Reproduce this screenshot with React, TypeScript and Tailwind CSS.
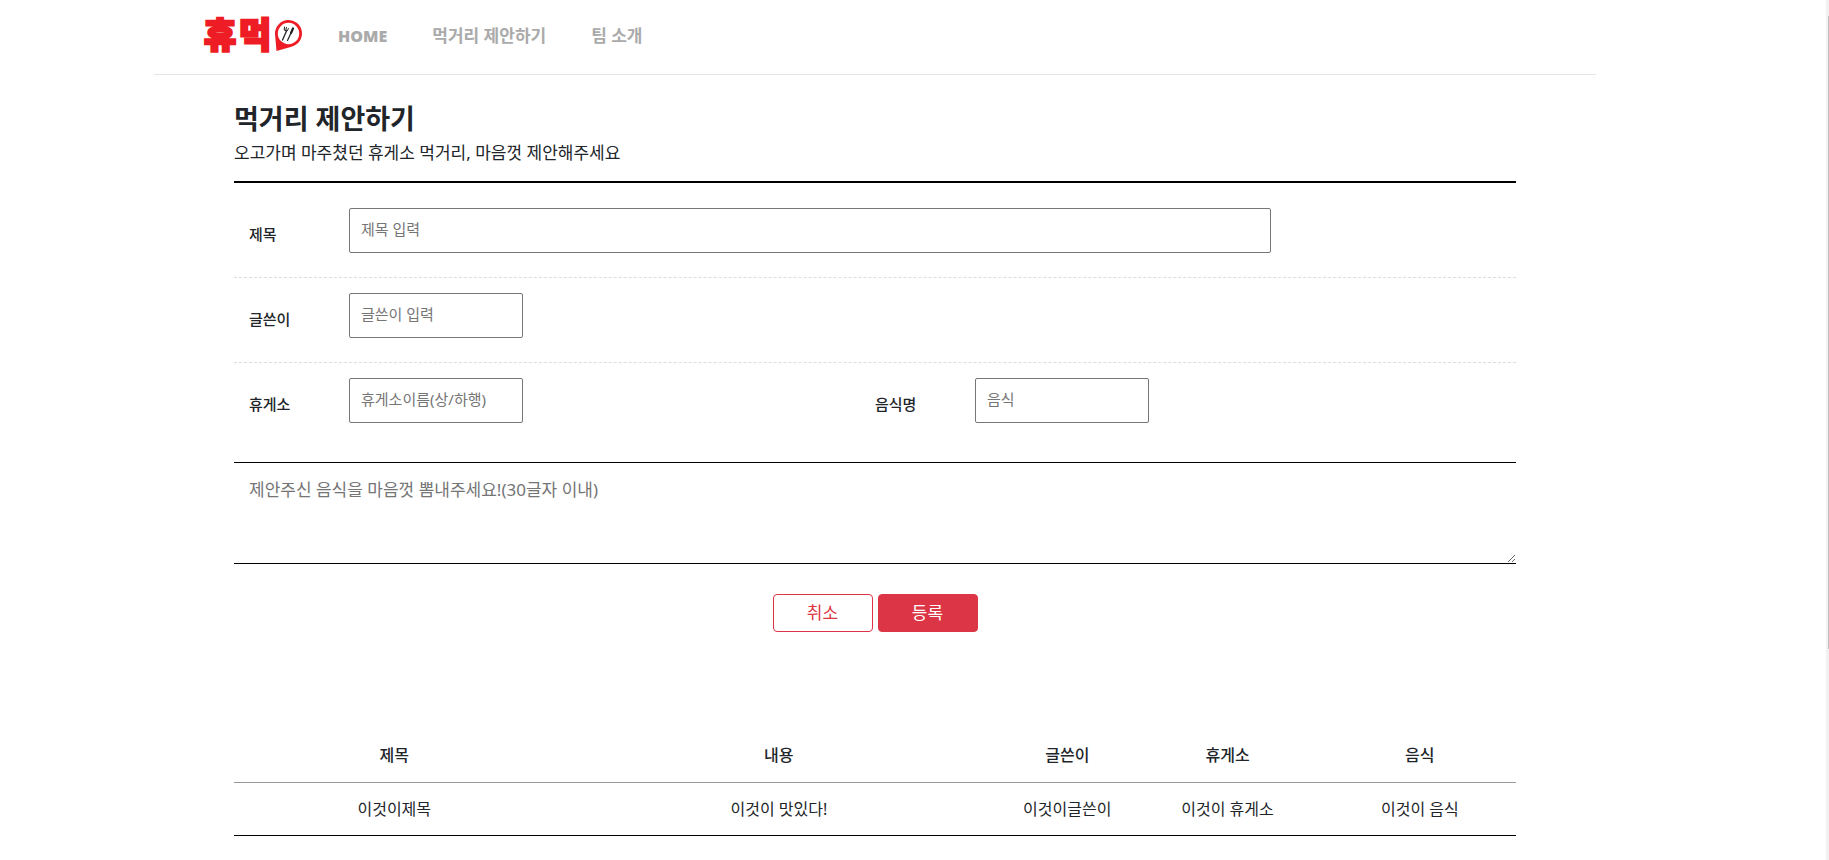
import React from "react";

const rows = [
  {
    title: "이것이제목",
    content: "이것이 맛있다!",
    writer: "이것이글쓴이",
    restArea: "이것이 휴게소",
    food: "이것이 음식",
  },
];

const Logo = () => {
  return (
    <svg
      width="100"
      height="40"
      viewBox="0 0 100 40"
      role="img"
      aria-label="휴먹"
      className="overflow-visible"
    >
      <g
        fontSize="35"
        fontWeight="900"
        fill="#ee1c25"
        stroke="#ee1c25"
        strokeWidth="2.4"
        fontFamily="'Noto Sans CJK KR', sans-serif"
      >
        <text x="1" y="32">
          휴
        </text>
        <text x="36" y="32">
          먹
        </text>
      </g>
      <path d="M73.5 35 L72 18 A13.5 13.5 0 1 1 88.5 30.7 Z" fill="#ee1c25" />
      <circle cx="85.5" cy="17.5" r="10.7" fill="#fff" />
      <g stroke="#222" strokeLinecap="round" fill="none">
        <path d="M83.5 15 L79.5 24" strokeWidth="1.3" />
        <path d="M81.6 11 L81.2 14 L84 15.2 L85.4 12.5 M83.5 11.5 L82.6 14.5" strokeWidth="1" />
        <path d="M90 12.5 L88 17" strokeWidth="2.2" />
        <path d="M88 17 L84.5 24.5" strokeWidth="1.2" />
      </g>
    </svg>
  );
};

type FieldProps = {
  id: string;
  label: string;
  placeholder: string;
  wide?: boolean;
};

const Field = ({ id, label, placeholder, wide }: FieldProps) => {
  return (
    <div className="flex w-full">
      <label htmlFor={id} className="w-[100px] shrink-0 pt-4 text-[15px] leading-5 font-medium">
        {label}
      </label>
      <div className="flex-1">
        <input
          id={id}
          type="text"
          placeholder={placeholder}
          className={`block h-[45px] rounded-xs border border-[#767676] px-[11px] pb-[3px] text-[15px] placeholder:text-[#757575] ${
            wide ? "w-4/5" : "w-[174px]"
          }`}
        />
      </div>
    </div>
  );
};

const App = () => {
  return (
    <div className="flex min-h-screen bg-white font-['Noto_Sans','Noto_Sans_CJK_KR',sans-serif] text-[17px] text-[#212529]">
      <div className="flex-1 pr-[230px] pl-[154px]">
        <header className="flex h-[75px] items-start border-b border-[#e5e5e5] pt-4 pl-[49px]">
          <a href="#home">
            <Logo />
          </a>
          <nav className="flex gap-[45px] pt-2 pl-[35px] leading-6 font-bold text-[#aaa]">
            <a href="#home" className="text-base leading-6 font-black">
              HOME
            </a>
            <a href="#suggest">먹거리 제안하기</a>
            <a href="#team">팀 소개</a>
          </nav>
        </header>

        <main className="px-20">
          <h1 className="pt-6 text-[27px] leading-10 font-bold">먹거리 제안하기</h1>
          <p className="pb-3.5 leading-7">
            오고가며 마주쳤던 휴게소 먹거리, 마음껏 제안해주세요
          </p>

          <form className="border-t-2 border-black">
            <div className="border-b border-dashed border-[#ddd] px-[15px] pt-[25px] pb-6">
              <Field id="title" label="제목" placeholder="제목 입력" wide />
            </div>
            <div className="border-b border-dashed border-[#ddd] px-[15px] pt-[15px] pb-6">
              <Field id="writer" label="글쓴이" placeholder="글쓴이 입력" />
            </div>
            <div className="grid grid-cols-2 px-[15px] pt-[15px] pb-[39px]">
              <Field id="restArea" label="휴게소" placeholder="휴게소이름(상/하행)" />
              <Field id="food" label="음식명" placeholder="음식" />
            </div>
            <textarea
              aria-label="제안 내용"
              placeholder="제안주신 음식을 마음껏 뽐내주세요!(30글자 이내)"
              className="block h-[102px] w-full border-y border-black p-[15px] leading-6 placeholder:text-[#757575]"
            />
            <div className="flex justify-center gap-[5px] pt-[30px]">
              <button
                type="reset"
                className="h-[38px] w-[100px] rounded border border-[#dc3545] text-[#dc3545]"
              >
                취소
              </button>
              <button
                type="submit"
                className="h-[38px] w-[100px] rounded border border-[#dc3545] bg-[#dc3545] text-white"
              >
                등록
              </button>
            </div>
          </form>

          <table className="mt-[97px] w-full table-fixed text-center text-base leading-6">
            <thead>
              <tr className="h-[53px] border-b border-[#999]">
                <th className="w-[25%] font-medium">제목</th>
                <th className="w-[35%] font-medium">내용</th>
                <th className="w-[10%] font-medium">글쓴이</th>
                <th className="w-[15%] font-medium">휴게소</th>
                <th className="w-[15%] font-medium">음식</th>
              </tr>
            </thead>
            <tbody>
              {rows.map((row) => (
                <tr key={row.title} className="h-[53px] border-b border-black">
                  <td>{row.title}</td>
                  <td>{row.content}</td>
                  <td>{row.writer}</td>
                  <td>{row.restArea}</td>
                  <td>{row.food}</td>
                </tr>
              ))}
            </tbody>
          </table>
        </main>
      </div>

      {/* scroll bar */}
      <div className="flex h-screen w-[3px] flex-col items-end bg-[#f1f1f1] pt-4">
        <div className="h-3/4 w-px bg-[#c1c1c1]" />
      </div>
    </div>
  );
};

export default App;
